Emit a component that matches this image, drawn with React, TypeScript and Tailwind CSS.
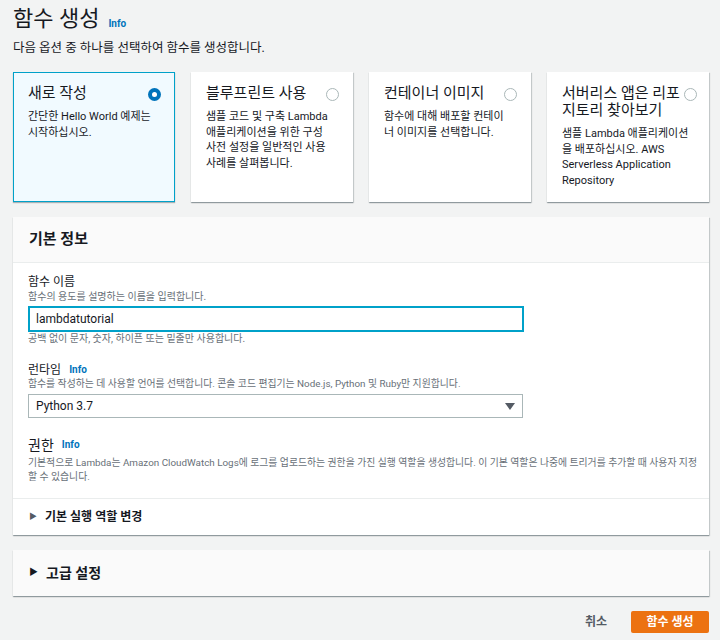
import React, { useState } from 'react';

const font = { fontFamily: 'Roboto, "Noto Sans CJK KR", sans-serif' };

interface OptionCardProps {
  title: React.ReactNode;
  desc: React.ReactNode;
  selected?: boolean;
  onSelect: () => void;
}

const Radio: React.FC<{ on: boolean }> = ({ on }) =>
  on ? (
    <span className="mt-[3px] flex h-[13px] w-[13px] shrink-0 items-center justify-center rounded-full bg-[#0073bb]">
      <span className="h-[5px] w-[5px] rounded-full bg-white" />
    </span>
  ) : (
    <span className="mt-[3px] h-[13px] w-[13px] shrink-0 rounded-full border border-[#aab7b8] bg-white" />
  );

const OptionCard: React.FC<OptionCardProps> = ({ title, desc, selected = false, onSelect }) => (
  <div
    onClick={onSelect}
    className={
      selected
        ? 'h-[130px] cursor-pointer border border-[#00a1c9] bg-[#f1faff] pl-[14px] pr-[13px] pt-[12px] shadow-[0_1px_1px_0_rgba(0,28,36,0.3)]'
        : 'h-[130px] cursor-pointer border border-transparent bg-white pl-[14px] pr-[13px] pt-[12px] shadow-[0_1px_1px_0_rgba(0,28,36,0.3),1px_1px_1px_0_rgba(0,28,36,0.15)]'
    }
  >
    <div className="flex items-start justify-between gap-[4px]">
      <div className="whitespace-nowrap text-[15px] leading-[17px] text-[#16191f]">{title}</div>
      <Radio on={selected} />
    </div>
    <div className="mt-[7px] whitespace-nowrap text-[11px] leading-[15.5px] text-[#16191f]">{desc}</div>
  </div>
);

const Info = () => <span className="ml-[8px] text-[10px] font-bold text-[#0073bb]">Info</span>;

const App: React.FC = () => {
  const [choice, setChoice] = useState(0);
  const [name, setName] = useState('lambdatutorial');

  return (
    <div className="min-h-[640px] w-[720px] bg-[#f2f3f3] pl-[13px] pr-[11px] pt-[4px] text-[#16191f]" style={font}>
      <div className="flex items-end">
        <h1 className="text-[22px] leading-[30px]">함수 생성</h1>
        <span className="mb-[3px] ml-[9px] text-[10px] font-bold text-[#0073bb]">Info</span>
      </div>
      <p className="mt-[5px] text-[12.5px] leading-[18px] text-[#16191f]">다음 옵션 중 하나를 선택하여 함수를 생성합니다.</p>

      {/* option cards */}
      <div className="mt-[15px] grid grid-cols-4 gap-[16px]">
        <OptionCard
          selected={choice === 0}
          onSelect={() => setChoice(0)}
          title="새로 작성"
          desc={<>간단한 Hello World 예제는<br />시작하십시오.</>}
        />
        <OptionCard
          selected={choice === 1}
          onSelect={() => setChoice(1)}
          title="블루프린트 사용"
          desc={<>샘플 코드 및 구축 Lambda<br />애플리케이션을 위한 구성<br />사전 설정을 일반적인 사용<br />사례를 살펴봅니다.</>}
        />
        <OptionCard
          selected={choice === 2}
          onSelect={() => setChoice(2)}
          title="컨테이너 이미지"
          desc={<>함수에 대해 배포할 컨테이<br />너 이미지를 선택합니다.</>}
        />
        <OptionCard
          selected={choice === 3}
          onSelect={() => setChoice(3)}
          title={<>서버리스 앱은 리포<br />지토리 찾아보기</>}
          desc={<>샘플 Lambda 애플리케이션<br />을 배포하십시오. AWS<br />Serverless Application<br />Repository</>}
        />
      </div>

      {/* basic info */}
      <div className="mt-[15px] bg-white shadow-[0_1px_1px_0_rgba(0,28,36,0.3),1px_1px_1px_0_rgba(0,28,36,0.15)]">
        <div className="flex h-[46px] items-center border-b border-[#eaeded] bg-[#fafafa] px-[16px]">
          <h2 className="text-[15px] font-bold">기본 정보</h2>
        </div>
        <div className="pl-[15px] pr-[8px] pt-[11px]">
          <div className="text-[12px] leading-[16px]">함수 이름</div>
          <div className="text-[10px] leading-[14px] text-[#687078]">함수의 용도를 설명하는 이름을 입력합니다.</div>
          <input
            value={name}
            onChange={(e) => setName(e.target.value)}
            className="mt-[2px] block h-[26px] w-[496px] border-2 border-[#00a1c9] px-[6px] text-[12px] outline-none"
          />
          <div className="text-[10px] leading-[14px] text-[#687078]">공백 없이 문자, 숫자, 하이픈 또는 밑줄만 사용합니다.</div>

          <div className="mt-[17px] flex items-center text-[12px] leading-[14px]">
            런타임<Info />
          </div>
          <div className="text-[9.85px] leading-[14px] text-[#687078]">
            함수를 작성하는 데 사용할 언어를 선택합니다. 콘솔 코드 편집기는 Node.js, Python 및 Ruby만 지원합니다.
          </div>
          <div className="mt-[3px] flex h-[24px] w-[495px] items-center justify-between border border-[#aab7b8] pl-[7px] pr-[7px]">
            <span className="text-[12px]">Python 3.7</span>
            <svg width="10" height="7" viewBox="0 0 10 7"><path d="M0 0h10L5 7z" fill="#545b64" /></svg>
          </div>

          <div className="mt-[17px] flex items-center text-[14px] leading-[20px]">
            권한<Info />
          </div>
          <div className="mt-[1px] whitespace-nowrap pb-[14px] text-[9.85px] leading-[14px] text-[#687078]">
            기본적으로 Lambda는 Amazon CloudWatch Logs에 로그를 업로드하는 권한을 가진 실행 역할을 생성합니다. 이 기본 역할은 나중에 트리거를 추가할 때 사용자 지정
            <br />할 수 있습니다.
          </div>
        </div>
        <div className="flex h-[37px] items-center gap-[8px] border-t border-[#eaeded] px-[16px] text-[12px] font-bold text-[#16191f]">
          <span className="text-[8px] text-[#545b64]">▶</span>기본 실행 역할 변경
        </div>
      </div>

      {/* advanced */}
      <div className="mt-[15px] flex h-[46px] items-center gap-[8px] bg-[#fafafa] px-[16px] shadow-[0_1px_1px_0_rgba(0,28,36,0.3),1px_1px_1px_0_rgba(0,28,36,0.15)]">
        <span className="text-[9px]">▶</span>
        <span className="text-[14px] font-bold">고급 설정</span>
      </div>

      {/* footer */}
      <div className="mt-[15px] flex items-center justify-end gap-[24px]">
        <button className="text-[12px] font-bold text-[#545b64]">취소</button>
        <button className="h-[22px] w-[78px] rounded-[2px] bg-[#ec7211] text-[12px] font-bold text-white">함수 생성</button>
      </div>
    </div>
  );
};

export default App;
